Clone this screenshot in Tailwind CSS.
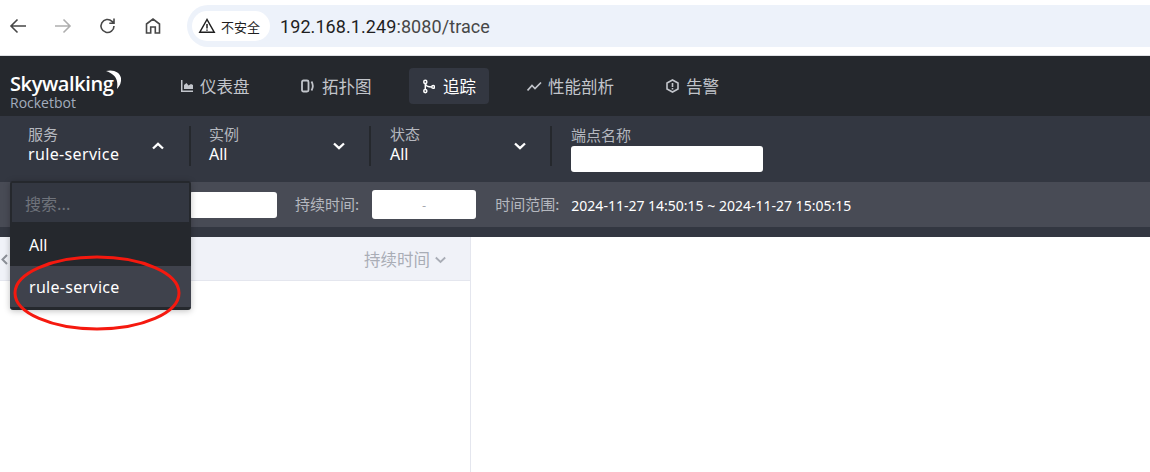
<!DOCTYPE html>
<html lang="zh">
<head>
<meta charset="utf-8">
<script src="https://cdn.jsdelivr.net/npm/@tailwindcss/browser@4"></script>
</head>
<body class="relative w-[1150px] h-[472px] overflow-hidden bg-white font-['Noto_Sans','Noto_Sans_CJK_SC',sans-serif]">
  <!-- browser bar -->
  <header class="h-[56px] flex items-start border-b border-[#dfe1e5] bg-white">
    <div class="flex items-center h-[52px] pl-[8px] gap-[25px] text-[#474747]">
      <svg class="w-[20px] h-[20px]" viewBox="0 0 20 20" fill="none" stroke="#474747" stroke-width="1.6"><path d="M18 10H3M9.5 3.5 3 10l6.500 6.500"/></svg>
      <svg class="w-[20px] h-[20px]" viewBox="0 0 20 20" fill="none" stroke="#aeaeae" stroke-width="1.6"><path d="M2 10h15M10.500 3.500 17 10l-6.500 6.500"/></svg>
      <svg class="w-[20px] h-[20px]" viewBox="0 0 20 20" fill="none" stroke="#474747" stroke-width="1.600"><path d="M16 10a6.500 6.500 0 1 1-2-4.700L16 7.200M16 2.500v4.700h-4.700"/></svg>
      <svg class="w-[20px] h-[20px]" viewBox="0 0 20 20" fill="none" stroke="#474747" stroke-width="1.600"><path d="M3.500 17V8L10 3l6.500 5v9h-4.200v-6H7.700v6z"/></svg>
    </div>
    <div class="ml-[24px] mt-[5px] flex-1 h-[42px] rounded-l-[21px] bg-[#edf2fa] flex items-center pl-[5px]">
      <div class="h-[30px] w-[78px] rounded-full bg-white flex items-center pl-[6px] gap-[5px]">
        <svg class="w-[18px] h-[18px]" viewBox="0 0 18 18" fill="none" stroke="#1f1f1f" stroke-width="1.500"><path d="M9 2.500 1.800 15.200h14.400z"/><path d="M9 7v4.500M9 12.500v1.200"/></svg>
        <span class="text-[13px] leading-none text-[#1f1f1f] font-['Noto_Sans_CJK_SC',sans-serif]">不安全</span>
      </div>
      <div class="ml-[10px] text-[18px] tracking-[0.08px] font-['Roboto',sans-serif] text-[#1f1f1f]">192.168.1.249<span class="text-[#474747]">:8080/trace</span></div>
    </div>
  </header>

  <!-- app nav -->
  <nav class="h-[60px] bg-[#25282d] flex items-center">
    <div class="w-[171px] pl-[10px] h-full relative shrink-0">
      <div class="absolute left-[10px] top-[18px] text-[20px] leading-[20px] font-semibold text-white font-['Open_Sans',sans-serif] tracking-[-0.4px]">Skywalking</div>
      <svg class="absolute left-[103px] top-[13px] w-[20px] h-[22px]" viewBox="0 0 20 22"><path d="M3 2C10 0 17 3 18 9c.5 4-1 8-4 11 1-6 1-14-11-18z" fill="#fff"/></svg>
      <div class="absolute left-[10px] top-[39px] text-[14px] leading-[16px] text-[#a3adbd] font-['Open_Sans',sans-serif]">Rocketbot</div>
    </div>
    <div class="flex items-center h-[36px] text-[16.500px] text-[#c2c5cb] font-['Noto_Sans_CJK_SC',sans-serif]">
      <a class="flex items-center gap-[7px] w-[120px] px-[10px]">
        <svg class="w-[12px] h-[12px]" viewBox="0 0 12 12" fill="#c2c5cb"><path d="M0 0h1.500v10.500H12V12H0zM3 9V5l2.500-2 2 2.500L10 4l2 1v4z"/></svg>
        <span class="pt-[1px]">仪表盘</span>
      </a>
      <a class="flex items-center gap-[8px] w-[118px] px-[10px]">
        <svg class="w-[13px] h-[14px]" viewBox="0 0 13 14" fill="none" stroke="#c2c5cb" stroke-width="1.800"><rect x="1" y="1.500" width="6.500" height="11" rx="1.500"/><path d="M10.500 2.500c1.500 2.500 1.500 6.500 0 9"/></svg>
        <span class="pt-[1px]">拓扑图</span>
      </a>
      <a class="flex items-center gap-[8px] w-[80px] h-[36px] pl-[14px] rounded-[4px] bg-[#333741] text-white">
        <svg class="w-[12px] h-[15px]" viewBox="0 0 13 15" fill="none" stroke="#fff" stroke-width="1.600"><circle cx="2.500" cy="2.500" r="1.700"/><circle cx="2.500" cy="12.500" r="1.700"/><circle cx="11" cy="8" r="1.500"/><path d="M2.500 4.200v6.600M2.800 5c.5 2.500 3 3 6.700 3"/></svg>
        <span class="pt-[1px]">追踪</span>
      </a>
      <a class="flex items-center gap-[6px] w-[139px] ml-[28px] px-[10px]">
        <svg class="w-[15px] h-[11px]" viewBox="0 0 15 11" fill="none" stroke="#c2c5cb" stroke-width="1.700"><path d="M.5 9.500 5 4.500l3 3 6-6"/></svg>
        <span class="pt-[1px]">性能剖析</span>
      </a>
      <a class="flex items-center gap-[7px] px-[10px]">
        <svg class="w-[13px] h-[14px]" viewBox="0 0 13 14" fill="none" stroke="#c2c5cb" stroke-width="1.600"><path d="M6.500 1 12 4v6l-5.500 3L1 10V4z"/><path d="M6.500 4v4M6.500 9v1.500"/></svg>
        <span class="pt-[1px]">告警</span>
      </a>
    </div>
  </nav>

  <!-- filter row -->
  <section class="h-[66px] bg-[#333741] flex items-start pt-[10px] pl-[10px] font-['Noto_Sans_CJK_SC',sans-serif]">
    <div class="w-[181px] h-[40px] border-r-2 border-[#25282d] pl-[18px] pr-[25px] flex items-center justify-between">
      <div>
        <div class="text-[15px] leading-[16px] text-[#b5b8bf]">服务</div>
        <div class="text-[16px] leading-[24px] tracking-[0.35px] text-white font-['Noto_Sans',sans-serif]">rule-service</div>
      </div>
      <svg class="w-[12px] h-[8px]" viewBox="0 0 12 8" fill="none" stroke="#fff" stroke-width="2.300"><path d="M1 6.500 6 1.800l5 4.700"/></svg>
    </div>
    <div class="w-[180px] h-[40px] border-r-2 border-[#25282d] pl-[18px] pr-[24px] flex items-center justify-between">
      <div>
        <div class="text-[15px] leading-[16px] text-[#b5b8bf]">实例</div>
        <div class="text-[16px] leading-[24px] text-white font-['Noto_Sans',sans-serif]">All</div>
      </div>
      <svg class="w-[12px] h-[8px]" viewBox="0 0 12 8" fill="none" stroke="#fff" stroke-width="2.300"><path d="M1 1.500 6 6.200l5-4.700"/></svg>
    </div>
    <div class="w-[181px] h-[40px] border-r-2 border-[#25282d] pl-[19px] pr-[24px] flex items-center justify-between">
      <div>
        <div class="text-[15px] leading-[16px] text-[#b5b8bf]">状态</div>
        <div class="text-[16px] leading-[24px] text-white font-['Noto_Sans',sans-serif]">All</div>
      </div>
      <svg class="w-[12px] h-[8px]" viewBox="0 0 12 8" fill="none" stroke="#fff" stroke-width="2.300"><path d="M1 1.500 6 6.200l5-4.700"/></svg>
    </div>
    <div class="pl-[19px] pt-[1px]">
      <div class="text-[15px] leading-[16px] text-[#b5b8bf]">端点名称</div>
      <div class="mt-[3px] w-[192px] h-[26px] rounded-[3px] bg-white"></div>
    </div>
  </section>

  <!-- second row -->
  <section class="h-[45px] bg-[#484b55] flex items-center text-[15px] font-['Noto_Sans_CJK_SC',sans-serif]">
    <div class="ml-[189px] w-[88px] h-[26px] rounded-[3px] bg-white"></div>
    <span class="ml-[18px] text-[#b5b8bf]">持续时间:</span>
    <div class="ml-[13px] w-[104px] h-[29px] rounded-[3px] bg-white flex items-center justify-center text-[#9a9ea6] text-[12px]">-</div>
    <span class="ml-[19px] text-[#b5b8bf]">时间范围:</span>
    <span class="ml-[12px] pt-[1px] text-[14px] text-white font-['Noto_Sans',sans-serif]">2024-11-27 14:50:15 ~ 2024-11-27 15:05:15</span>
  </section>
  <div class="h-[10px] bg-[#333741]"></div>

  <!-- content -->
  <main class="h-[235px] flex">
    <div class="w-[471px] border-r border-[#e4e6ee]">
      <div class="h-[44px] pt-[2px] bg-[#f0f2f8] border-b border-[#e4e6ee] flex items-center justify-end pr-[24px] gap-[5px] text-[16.500px] text-[#a9adb6] font-['Noto_Sans_CJK_SC',sans-serif]">
        <span>持续时间</span>
        <svg class="w-[11px] h-[8px]" viewBox="0 0 11 8" fill="none" stroke="#a9adb6" stroke-width="1.800"><path d="M.8 1.500 5.500 6l4.700-4.500"/></svg>
      </div>
    </div>
  </main>

  <!-- left chevron behind dropdown -->
  <svg class="absolute left-[1px] top-[254px] w-[7px] h-[11px]" viewBox="0 0 7 11" fill="none" stroke="#8d9199" stroke-width="2"><path d="M6 1 1.500 5.500 6 10"/></svg>

  <!-- dropdown -->
  <div class="absolute left-[10px] top-[181px] w-[181px] h-[129px] rounded-[3px] bg-[#25282d] shadow-[0_1px_6px_rgba(0,0,0,0.25)] overflow-hidden text-[16px] text-white">
    <div class="mx-[2px] mt-[2px] h-[39px] bg-[#333741] flex items-center pl-[13px] text-[16px] text-[#6f737b] font-['Noto_Sans_CJK_SC',sans-serif]">搜索...</div>
    <div class="h-[44px] pt-[1px] flex items-center pl-[19px]">All</div>
    <div class="h-[41px] bg-[#3f424c] flex items-center pl-[19px] tracking-[0.3px]">rule-service</div>
  </div>

  <!-- red annotation -->
  <svg class="absolute left-[12px] top-[253px] w-[172px] h-[80px]" viewBox="0 0 172 80" fill="none">
    <ellipse cx="85" cy="40" rx="82" ry="36" stroke="#f5190f" stroke-width="3"/>
  </svg>
</body>
</html>
